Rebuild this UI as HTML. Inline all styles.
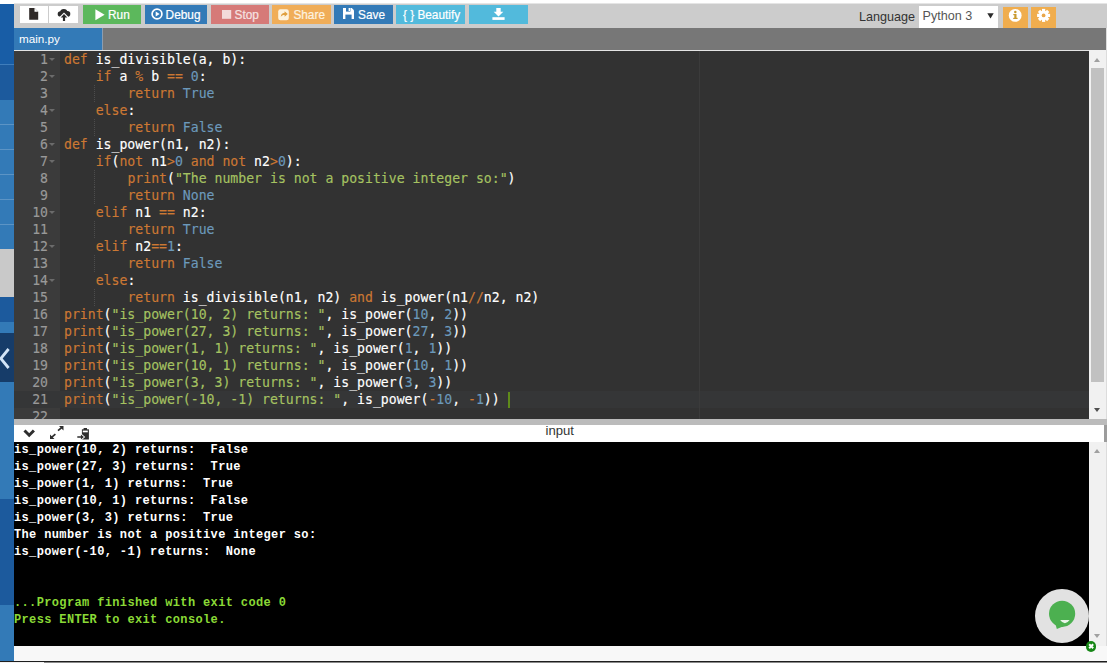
<!DOCTYPE html>
<html lang="en">
<head>
<meta charset="utf-8">
<title>Online Python Compiler - main.py</title>
<style>
*{box-sizing:border-box;margin:0;padding:0}
html,body{width:1107px;height:663px;overflow:hidden;background:#fff}
body{position:relative;font-family:"Liberation Sans",Arial,Helvetica,sans-serif;font-size:12.6px;color:#333}
.abs{position:absolute}
/* ---------- left sidebar ---------- */
#side{left:0;top:4px;width:14px;height:657px;background:#337ab7;overflow:hidden}
#side div{position:absolute;left:0;width:14px}
/* ---------- top bar ---------- */
#topbar{left:14px;top:4px;width:1093px;height:24px;background:#ccc;box-shadow:0 -0.5px 0 #ccc}
.btn{position:absolute;top:1.1px;height:18.5px;color:#fff;font-size:11.85px;line-height:21px;-webkit-text-stroke:0.2px currentColor;white-space:nowrap;border-radius:0}
.btn span{position:absolute;top:0}
.btn svg{position:absolute}
.wbtn{position:absolute;top:2.1px;height:17px;background:#fff}
/* ---------- tabs ---------- */
#tabs{left:14px;top:28px;width:1092px;height:22.3px;background:#777}
#tab{left:0;top:0;width:89px;height:22.3px;background:#337ab7;color:#fff;font-size:11.7px;line-height:22.2px;padding-left:5px;border-right:1px solid #8c9db0}
#tabline{left:14px;top:50.3px;width:1092px;height:1px;background:#e4e4e4}
/* ---------- editor ---------- */
#editor{left:14px;top:51px;width:1075px;height:368px;background:#323232;overflow:hidden;
 font-family:"DejaVu Sans Mono","Liberation Mono",monospace;font-size:13.16px;line-height:17px;color:#fff;-webkit-text-stroke:0.15px currentColor}
#gutter{left:0;top:0;width:46px;height:368px;background:#3b3b3b;color:#999}
.gl{position:absolute;left:0;width:34px;height:17px;text-align:right;white-space:pre}
.gl i{position:absolute;left:35px;top:7px;width:0;height:0;border-left:3.5px solid transparent;border-right:3.5px solid transparent;border-top:3px solid #6b6b6b}
#active{left:0;top:340px;width:1075px;height:17px;background:#353637}
#pm{left:684.6px;top:0;width:1px;height:368px;background:#3b3b3b}
.cl{position:absolute;left:50px;height:17px;white-space:pre;letter-spacing:0}
.ig{position:absolute;left:80px;width:1px;height:17px;background:repeating-linear-gradient(#4d4d4d 0 1px,transparent 1px 2px)}
.k{color:#cc7833}.c{color:#6c99bb}.s{color:#a5c261}
#cursor{left:494px;top:341px;width:2px;height:16px;background:#5f8a1a}
/* ---------- scrollbars ---------- */
.sb{background:#f1f1f1}
.thumb{position:absolute;left:2px;width:13px;background:#c1c1c1}
.arr{position:absolute;left:4.6px;width:0;height:0;border-left:3.9px solid transparent;border-right:3.9px solid transparent}
/* ---------- splitter / console ---------- */
#split{left:14px;top:419px;width:1093px;height:6px;background:#bbb}
#ctool{left:14px;top:425px;width:1093px;height:17px;background:#fff}
#ctool .t{position:absolute;left:531.5px;top:-0.8px;line-height:13.4px;font-size:13.1px;color:#333}
#console{left:14px;top:442px;width:1075px;height:204px;background:#000;overflow:hidden}
#console pre{position:absolute;left:0;top:0.4px;font-family:"Liberation Mono","Courier New",monospace;font-weight:bold;font-size:12px;letter-spacing:0.36px;line-height:17px;color:#fff}
#console .g{color:#8ad936}
#bottom{left:14px;top:646px;width:1093px;height:15px;background:#f8f8f8}
#bline{left:0;top:661px;width:1107px;height:2px;background:#8a8a8a;border-top:1.3px solid #1e1e1e}
/* ---------- chat bubble ---------- */
#chat{left:1035px;top:589px;width:54px;height:54px;border-radius:50%;background:#e2e2e2}
</style>
</head>
<body>

<!-- left sidebar -->
<div id="side" class="abs">
  <div style="top:0;height:60px;background:#185da6"></div>
  <div style="top:60px;height:1px;background:#3f7dbb"></div>
  <div style="top:61px;height:34.5px;background:#1c5a9d"></div>
  <div style="top:95.5px;height:149.5px;background:#337ab7"></div>
  <div style="top:120px;height:1px;background:#5c94c5"></div>
  <div style="top:145px;height:1px;background:#5c94c5"></div>
  <div style="top:170px;height:1px;background:#5c94c5"></div>
  <div style="top:195px;height:1px;background:#5c94c5"></div>
  <div style="top:220px;height:1px;background:#5c94c5"></div>
  <div style="top:245px;height:48px;background:#c9c9c9"></div>
  <div style="top:293px;height:25px;background:#1c5a9d"></div>
  <div style="top:318px;height:11px;background:#337ab7"></div>
  <div style="top:329px;height:49px;background:#163c69">
    <svg width="14" height="49" viewBox="0 0 14 49"><path d="M8.6 16 L0.8 25.5 L8.6 35" fill="none" stroke="#d3e4f6" stroke-width="2.8"/></svg>
  </div>
  <div style="top:378px;height:117px;background:#337ab7"></div>
  <div style="top:495px;height:106px;background:#1c5a9d"></div>
  <div style="top:601px;height:56px;background:#337ab7"></div>
</div>

<!-- top toolbar -->
<div id="topbar" class="abs">
  <div class="wbtn" style="left:6px;width:28px">
    <svg width="28" height="17" viewBox="0 0 28 17"><path d="M9.2 2 h5.3 l3.7 3.7 v8 h-9z" fill="#2f2a28"/><path d="M14.5 2 v3.7 h3.7z" fill="#fff"/><path d="M14.9 2.9 v2.4 h2.4z" fill="#2f2a28" opacity="0"/></svg>
  </div>
  <div class="wbtn" style="left:35px;width:29.3px">
    <svg width="29" height="17" viewBox="0 0 29 17"><g fill="#2b2b2b"><circle cx="11.5" cy="8" r="2.8"/><circle cx="14.8" cy="6.7" r="3.8"/><circle cx="18.5" cy="7.9" r="2.8"/><rect x="11.5" y="8" width="7" height="2.8"/></g><path d="M15 6.6 L20 11.6 H10z" fill="#fff"/><path d="M15 8 l3.3 3.5 h-2.2 v3.5 h-2.2 v-3.5 h-2.2z" fill="#2b2b2b"/></svg>
  </div>
  <div class="btn" style="left:69px;width:58px;background:#5cb85c">
    <svg width="10" height="12" viewBox="0 0 10 12" style="left:12px;top:3.6px"><path d="M0.4 0.3 L9.6 5.8 L0.4 11.3z" fill="#fff"/></svg>
    <span style="left:25px">Run</span>
  </div>
  <div class="btn" style="left:131px;width:62px;background:#337ab7">
    <svg width="12" height="12" viewBox="0 0 12 12" style="left:6px;top:3.4px"><circle cx="6" cy="6" r="4.9" fill="none" stroke="#fff" stroke-width="1.7"/><path d="M4.7 3.5 L8.6 6 L4.7 8.5z" fill="#fff"/></svg>
    <span style="left:20.6px">Debug</span>
  </div>
  <div class="btn" style="left:196.5px;width:58.4px;background:#d67a78">
    <svg width="10" height="10" viewBox="0 0 10 10" style="left:11.3px;top:4.8px"><rect width="9.2" height="8.8" fill="#f3dad9"/></svg>
    <span style="left:24px;color:#f6e3e2">Stop</span>
  </div>
  <div class="btn" style="left:258.2px;width:58.7px;background:#f0ad58">
    <svg width="12" height="12" viewBox="0 0 12 12" style="left:5.8px;top:3.7px"><rect x="0.2" y="0.3" width="10.6" height="10.9" rx="2.2" fill="#fdf3e0"/><path d="M6.6 2.2 L9.8 5 L6.6 7.8 v-1.7 c-1.8 0 -3 0.5 -3.8 2 c0 -2.6 1.4 -4.1 3.8 -4.3z" fill="#e0a040"/></svg>
    <span style="left:21.2px;color:#fdf3e0">Share</span>
  </div>
  <div class="btn" style="left:320.2px;width:58.7px;background:#337ab7">
    <svg width="11" height="11" viewBox="0 0 11 11" style="left:8.8px;top:3px"><path d="M0 0 h8.8 l2.2 2.2 v8.8 h-11z" fill="#fff"/><rect x="3" y="0" width="4.4" height="3.6" fill="#337ab7"/><rect x="5.6" y="0" width="1.4" height="3" fill="#fff"/><rect x="2.4" y="6.6" width="6.2" height="4.4" fill="#337ab7"/></svg>
    <span style="left:23.9px">Save</span>
  </div>
  <div class="btn" style="left:382px;width:68.7px;background:#52badc">
    <span style="left:6.9px">{ } Beautify</span>
  </div>
  <div class="btn" style="left:455px;width:58.8px;background:#52badc">
    <svg width="13" height="12" viewBox="0 0 13 12" style="left:23px;top:3.1px"><path d="M4.3 0 h4.4 v3.8 h2.6 L6.5 8.4 L1.7 3.8 h2.6z" fill="#fff"/><rect x="0.4" y="9.2" width="12.2" height="2.7" fill="#fff"/></svg>
  </div>

  <span class="abs" style="left:845px;top:5.5px;line-height:15px;font-size:12.6px;color:#333">Language</span>
  <div class="abs" style="left:904.9px;top:2.1px;width:79.3px;height:21.9px;background:#fff;color:#555;font-size:12.6px;line-height:21.5px;padding-left:3.6px">Python 3
    <svg class="abs" width="7" height="6" viewBox="0 0 7 6" style="left:68px;top:7.2px"><path d="M0.3 0.3 h6.4 L3.5 5.6z" fill="#2b2b2b"/></svg>
  </div>
  <div class="abs" style="left:989.2px;top:3px;width:24.9px;height:21px;background:#f0ad4e">
    <svg width="25" height="21" viewBox="0 0 25 21"><circle cx="12.2" cy="8.4" r="6.4" fill="#fff"/><g fill="#c99a2e"><rect x="11.3" y="7" width="2.2" height="4.6"/><rect x="10.3" y="7" width="2" height="1.2"/><rect x="10.2" y="10.8" width="4.4" height="1.2"/><circle cx="12.3" cy="4.9" r="1.25"/></g></svg>
  </div>
  <div class="abs" style="left:1017.4px;top:3px;width:24.5px;height:21px;background:#f0ad4e">
    <svg width="25" height="21" viewBox="0 0 25 21"><g transform="translate(12.6 8.4)" fill="#fff"><circle r="4.7"/><rect x="-1.6" y="-6.5" width="3.2" height="13"/><g transform="rotate(45)"><rect x="-1.6" y="-6.5" width="3.2" height="13"/></g><g transform="rotate(90)"><rect x="-1.6" y="-6.5" width="3.2" height="13"/></g><g transform="rotate(135)"><rect x="-1.6" y="-6.5" width="3.2" height="13"/></g><circle r="1.9" fill="#e9a64a"/></g></svg>
  </div>
</div>

<!-- file tabs -->
<div id="tabs" class="abs"><div id="tab" class="abs">main.py</div></div>
<div id="tabline" class="abs"></div>

<!-- code editor -->
<div id="editor" class="abs">
  <div id="active" class="abs"></div>
  <div id="pm" class="abs"></div>
  <div id="gutter" class="abs">
<div class="abs" style="left:0;top:340px;width:46px;height:17px;background:#353637"></div>
<div class="gl" style="top:0px">1<i></i></div>
<div class="gl" style="top:17px">2<i></i></div>
<div class="gl" style="top:34px">3</div>
<div class="gl" style="top:51px">4<i></i></div>
<div class="gl" style="top:68px">5</div>
<div class="gl" style="top:85px">6<i></i></div>
<div class="gl" style="top:102px">7<i></i></div>
<div class="gl" style="top:119px">8</div>
<div class="gl" style="top:136px">9</div>
<div class="gl" style="top:153px">10<i></i></div>
<div class="gl" style="top:170px">11</div>
<div class="gl" style="top:187px">12<i></i></div>
<div class="gl" style="top:204px">13</div>
<div class="gl" style="top:221px">14<i></i></div>
<div class="gl" style="top:238px">15</div>
<div class="gl" style="top:255px">16</div>
<div class="gl" style="top:272px">17</div>
<div class="gl" style="top:289px">18</div>
<div class="gl" style="top:306px">19</div>
<div class="gl" style="top:323px">20</div>
<div class="gl" style="top:340px">21</div>
<div class="gl" style="top:357px">22</div>
  </div>
<div class="cl" style="top:0px"><span class="k">def</span> is_divisible(a, b):</div>
<div class="cl" style="top:17px">    <span class="k">if</span> a <span class="k">%</span> b <span class="k">==</span> <span class="c">0</span>:</div>
<b class="ig" style="top:34px"></b><div class="cl" style="top:34px">        <span class="k">return</span> <span class="c">True</span></div>
<div class="cl" style="top:51px">    <span class="k">else</span>:</div>
<b class="ig" style="top:68px"></b><div class="cl" style="top:68px">        <span class="k">return</span> <span class="c">False</span></div>
<div class="cl" style="top:85px"><span class="k">def</span> is_power(n1, n2):</div>
<div class="cl" style="top:102px">    <span class="k">if</span>(<span class="k">not</span> n1<span class="k">&gt;</span><span class="c">0</span> <span class="k">and</span> <span class="k">not</span> n2<span class="k">&gt;</span><span class="c">0</span>):</div>
<b class="ig" style="top:119px"></b><div class="cl" style="top:119px">        <span class="k">print</span>(<span class="s">"The number is not a positive integer so:"</span>)</div>
<b class="ig" style="top:136px"></b><div class="cl" style="top:136px">        <span class="k">return</span> <span class="c">None</span></div>
<div class="cl" style="top:153px">    <span class="k">elif</span> n1 <span class="k">==</span> n2:</div>
<b class="ig" style="top:170px"></b><div class="cl" style="top:170px">        <span class="k">return</span> <span class="c">True</span></div>
<div class="cl" style="top:187px">    <span class="k">elif</span> n2<span class="k">==</span><span class="c">1</span>:</div>
<b class="ig" style="top:204px"></b><div class="cl" style="top:204px">        <span class="k">return</span> <span class="c">False</span></div>
<div class="cl" style="top:221px">    <span class="k">else</span>:</div>
<b class="ig" style="top:238px"></b><div class="cl" style="top:238px">        <span class="k">return</span> is_divisible(n1, n2) <span class="k">and</span> is_power(n1<span class="k">//</span>n2, n2)</div>
<div class="cl" style="top:255px"><span class="k">print</span>(<span class="s">"is_power(10, 2) returns: "</span>, is_power(<span class="c">10</span>, <span class="c">2</span>))</div>
<div class="cl" style="top:272px"><span class="k">print</span>(<span class="s">"is_power(27, 3) returns: "</span>, is_power(<span class="c">27</span>, <span class="c">3</span>))</div>
<div class="cl" style="top:289px"><span class="k">print</span>(<span class="s">"is_power(1, 1) returns: "</span>, is_power(<span class="c">1</span>, <span class="c">1</span>))</div>
<div class="cl" style="top:306px"><span class="k">print</span>(<span class="s">"is_power(10, 1) returns: "</span>, is_power(<span class="c">10</span>, <span class="c">1</span>))</div>
<div class="cl" style="top:323px"><span class="k">print</span>(<span class="s">"is_power(3, 3) returns: "</span>, is_power(<span class="c">3</span>, <span class="c">3</span>))</div>
<div class="cl" style="top:340px"><span class="k">print</span>(<span class="s">"is_power(-10, -1) returns: "</span>, is_power(<span class="k">-</span><span class="c">10</span>, <span class="k">-</span><span class="c">1</span>))</div>
<div class="cl" style="top:357px"></div>
  <div id="cursor" class="abs"></div>
</div>
<div class="abs sb" style="left:1089px;top:50px;width:17px;height:369px">
  <div class="arr" style="top:7.7px;border-bottom:4.2px solid #a0a0a0"></div>
  <div class="thumb" style="top:18px;height:314px"></div>
  <div class="arr" style="top:357.9px;border-top:4.2px solid #4f4f4f"></div>
</div>
<div class="abs" style="left:1106px;top:28px;width:1px;height:633px;background:#dcdcdc"></div>

<!-- splitter + console toolbar -->
<div id="split" class="abs"></div>
<div id="ctool" class="abs">
  <svg class="abs" width="100" height="17" viewBox="0 0 100 17" style="left:0;top:0">
    <path d="M10.5 5.5 L15.2 10.2 L19.9 5.5" fill="none" stroke="#2e2e2e" stroke-width="3"/>
    <path d="M44 5.6 L48.2 2.1 M41.4 9.2 L37.3 12.7" stroke="#2e2e2e" stroke-width="1.7" fill="none"/>
    <path d="M45 0.9 h4.5 v4.5z M36 13.9 v-4.5 l4.5 4.5z" fill="#2e2e2e"/>
    <rect x="67.9" y="4.3" width="7" height="10.2" fill="#2e2e2e"/>
    <rect x="69.6" y="3" width="3.4" height="2.2" fill="#2e2e2e"/>
    <rect x="68.8" y="5.6" width="5" height="1.7" fill="#fff"/>
    <path d="M67.2 8.6 l4 3.4 l-4 3.4z" fill="#fff"/><path d="M63.3 11.3 h3.6 v-1.7 l3 2.4 l-3 2.4 v-1.7 h-3.6z" fill="#2e2e2e"/>
  </svg>
  <span class="t">input</span>
</div>

<!-- console output -->
<div id="console" class="abs"><pre>
is_power(10, 2) returns:  False
is_power(27, 3) returns:  True
is_power(1, 1) returns:  True
is_power(10, 1) returns:  False
is_power(3, 3) returns:  True
The number is not a positive integer so:
is_power(-10, -1) returns:  None


<span class="g">...Program finished with exit code 0</span>
<span class="g">Press ENTER to exit console.</span>
</pre></div>
<div class="abs sb" style="left:1089px;top:442px;width:17px;height:204px">
  <div class="arr" style="top:7.1px;border-bottom:4px solid #a0a0a0"></div>
  <div class="arr" style="top:191.5px;border-top:4px solid #a0a0a0"></div>
</div>
<div class="abs" style="left:1104.4px;top:425px;width:2.6px;height:17px;background:#9c9c9c"></div>
<div id="bottom" class="abs"></div>
<div id="bline" class="abs"><div class="abs" style="left:0;top:0;width:44px;height:1px;background:#f2f2f2"></div></div>

<!-- chat widget -->
<div id="chat" class="abs">
  <svg width="54" height="54" viewBox="0 0 54 54"><circle cx="27.1" cy="24.8" r="13.1" fill="#4cb050"/><path d="M20.5 35 L21.8 40 L28.5 37.2z" fill="#4cb050"/><path d="M25.2 31 h9.4 q-4.7 6.6 -9.4 0z" fill="#eaf6ea"/></svg>
</div>
<div class="abs" style="left:1085.8px;top:641.2px;width:10.4px;height:10.4px;border-radius:50%;background:#178717">
  <svg class="abs" width="10.4" height="10.4" viewBox="0 0 10.4 10.4" style="left:0;top:0"><path d="M3.2 3.2 L7.2 7.2 M7.2 3.2 L3.2 7.2" stroke="#fff" stroke-width="2"/></svg>
</div>

</body>
</html>
